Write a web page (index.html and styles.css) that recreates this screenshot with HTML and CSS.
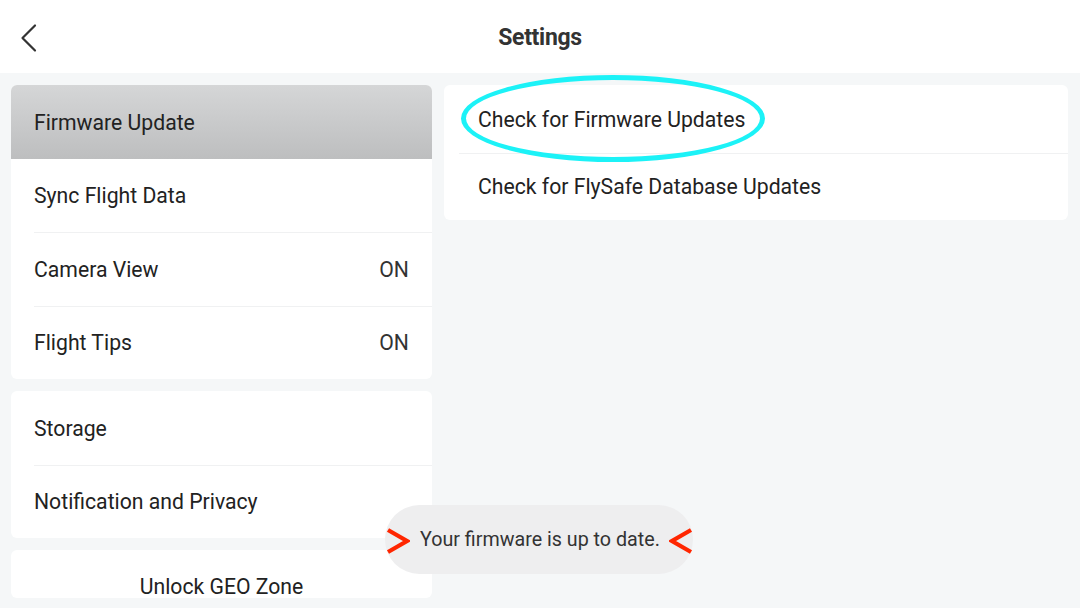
FILE: index.html
```html
<!DOCTYPE html>
<html lang="en">
<head>
<meta charset="utf-8">
<title>Settings</title>
<link rel="stylesheet" href="styles.css">
</head>
<body>
<div class="screen">
  <header class="topbar">
    <button class="back" aria-label="Back">
      <svg width="20" height="30" viewBox="0 0 20 30"><polyline points="15,2.5 2.5,15 15,27.5" fill="none" stroke="#333" stroke-width="2.2" stroke-linecap="round" stroke-linejoin="round"/></svg>
    </button>
    <h1 class="title">Settings</h1>
  </header>
  <main class="content">
    <nav class="menu">
      <section class="card">
        <div class="row selected"><span>Firmware Update</span></div>
        <div class="row"><span>Sync Flight Data</span></div>
        <div class="row"><span>Camera View</span><span class="value">ON</span></div>
        <div class="row"><span>Flight Tips</span><span class="value">ON</span></div>
      </section>
      <section class="card">
        <div class="row"><span>Storage</span></div>
        <div class="row"><span>Notification and Privacy</span></div>
      </section>
      <section class="card short">
        <div class="center-row">Unlock GEO Zone</div>
      </section>
    </nav>
    <section class="detail">
      <div class="card right">
        <div class="drow"><span>Check for Firmware Updates</span></div>
        <div class="drow"><span>Check for FlySafe Database Updates</span></div>
      </div>
    </section>
  </main>
  <div class="highlight"></div>
  <div class="toast">
    <svg class="arrow" width="24" height="26" viewBox="0 0 24 26"><polyline points="2,2 21,13 2,24" fill="none" stroke="#ff2600" stroke-width="4.2" stroke-linejoin="miter"/></svg>
    <span class="toast-text">Your firmware is up to date.</span>
    <svg class="arrow" width="24" height="26" viewBox="0 0 24 26"><polyline points="22,2 3,13 22,24" fill="none" stroke="#ff2600" stroke-width="4.2" stroke-linejoin="miter"/></svg>
  </div>
</div>
</body>
</html>
```

FILE: styles.css
```css
* { box-sizing: border-box; }
html, body { margin: 0; padding: 0; }
body {
  width: 1080px;
  height: 608px;
  overflow: hidden;
  font-family: Roboto, "Liberation Sans", Arial, sans-serif;
  color: #222;
  background: #f5f7f8;
}
.screen {
  position: relative;
  width: 1080px;
  height: 608px;
}
.topbar {
  height: 73px;
  background: #fff;
  display: flex;
  align-items: center;
  justify-content: center;
  position: relative;
}
.back {
  position: absolute;
  left: 20px;
  top: 23px;
  border: 0;
  background: none;
  padding: 0;
  width: 20px;
  height: 30px;
}
.back svg { display: block; }
.title {
  margin: 2px 0 0 0;
  font-size: 23px;
  font-weight: 700;
  color: #333;
  letter-spacing: -0.3px;
}
.content {
  display: grid;
  grid-template-columns: 421px 624px;
  column-gap: 12px;
  padding: 12px 0 0 11px;
  align-items: start;
}
.menu {
  display: flex;
  flex-direction: column;
  gap: 12px;
}
.card {
  background: #fff;
  border-radius: 6px;
  overflow: hidden;
}
.row {
  height: 73.5px;
  display: flex;
  align-items: center;
  justify-content: space-between;
  padding: 1px 23px 0;
  font-size: 21.2px;
  color: #222;
  position: relative;
}
.row + .row::before {
  content: "";
  position: absolute;
  left: 23px;
  right: 0;
  top: 0;
  height: 1px;
  background: #f0f1f2;
}
.row.selected {
  background: linear-gradient(#d5d6d7, #bdbebf);
}
.row.selected + .row::before { display: none; }
.value { color: #333; }
.card.short {
  height: 48px;
  display: flex;
  align-items: flex-end;
  justify-content: center;
}
.center-row {
  font-size: 21.2px;
  line-height: 22px;
  color: #222;
}
.card.right { border-radius: 6px; }
.drow {
  height: 67.5px;
  display: flex;
  align-items: center;
  padding: 1px 34px 0;
  font-size: 21.2px;
  color: #222;
  position: relative;
}
.drow + .drow::before {
  content: "";
  position: absolute;
  left: 15px;
  right: 0;
  top: 0;
  height: 1px;
  background: #f0f1f2;
}
.highlight {
  position: absolute;
  left: 461px;
  top: 75px;
  width: 304px;
  height: 87px;
  border: 5px solid #1cf2f7;
  border-radius: 50%;
  pointer-events: none;
}
.toast {
  position: absolute;
  left: 385px;
  top: 505px;
  width: 308px;
  height: 69px;
  border-radius: 35px;
  background: #eeeeef;
  display: flex;
  align-items: center;
  gap: 9px;
  padding: 0 0 0 1px;
}
.arrow { display: block; margin-top: 2px; flex: none; }
.toast-text {
  font-size: 19.7px;
  color: #333;
  white-space: nowrap;
  margin-left: 1px;
}
```
